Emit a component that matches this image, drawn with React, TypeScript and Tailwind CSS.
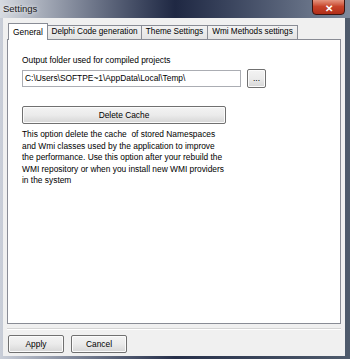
import React from 'react';

const font = { fontFamily: '"Liberation Sans", Arial, sans-serif' };

function WinButton({ label, className }: { label: string; className: string }) {
  return (
    <div
      className={`flex items-center justify-center rounded-[2px] border border-[#707070] bg-gradient-to-b from-[#f3f3f3] via-[#ebebeb] to-[#d6d6d6] text-[8.4px] text-black shadow-[inset_0_0_0_1px_#fbfbfb] ${className}`}
    >
      {label}
    </div>
  );
}

const tabs = [
  { label: 'Delphi Code generation', w: 'w-[95px]' },
  { label: 'Theme Settings', w: 'w-[67px]' },
  { label: 'Wmi Methods settings', w: 'w-[91px]' },
];

const lines = [
  'This option delete the cache\u00a0 of stored Namespaces',
  'and Wmi classes used by the application to improve',
  'the performance. Use this option after your rebuild the',
  'WMI repository or when you install new WMI providers',
  'in the system',
];

export default function App() {
  return (
    <div className="relative flex h-[359px] w-[350px] flex-col overflow-hidden bg-gradient-to-r from-[#c9ced8] via-[#27304a] to-[#4f5b6c]" style={font}>
      {/* title bar */}
      <div className="flex h-[18px] shrink-0 items-center justify-between bg-gradient-to-r from-[#d7dbe1] via-[#1f2843] to-[#7f8a9c] pl-[3px] pr-[5px]">
        <span className="text-[9.5px] text-[#1a1a1a] [text-shadow:0_0_4px_#ffffff]">Settings</span>
        <div className="-mt-[5px] flex h-[17px] w-[33px] items-center justify-center rounded-b-[4px] border border-[#3b1410] bg-gradient-to-b from-[#e8a08c] via-[#c7432a] to-[#b02d18] pt-[3px] text-[10px] font-bold text-white">
          ✕
        </div>
      </div>

      {/* client area */}
      <div className="ml-[3px] mr-[5px] mb-[3px] flex flex-1 flex-col bg-[#f0f0f0]">
        {/* tabs */}
        <div className="flex h-[21px] shrink-0 items-end pl-[5px] pt-[6px]">
          <div className="relative z-10 -mb-px flex h-[17px] w-[40px] items-center justify-center border border-b-0 border-[#898c95] bg-white text-[8.4px] text-black">
            General
          </div>
          {tabs.map((t) => (
            <div
              key={t.label}
              className={`-ml-px flex h-[14px] items-center justify-center border border-b-0 border-[#898c95] bg-gradient-to-b from-[#f2f2f2] to-[#e3e3e3] text-[8.2px] text-black first:ml-0 ${t.w}`}
            >
              {t.label}
            </div>
          ))}
        </div>

        {/* panel */}
        <div className="mx-[4px] h-[285px] shrink-0 border border-[#898c95] bg-white px-[14px] pt-[15px] text-[8.4px] text-black">
          <div className="leading-[11px]">Output folder used for compiled projects</div>
          <div className="mt-[3px] flex items-center gap-[6px]">
            <div className="flex h-[17px] w-[219px] items-center border border-[#abadb3] bg-white px-[2px] text-[8.4px]">
              C:\Users\SOFTPE~1\AppData\Local\Temp\
            </div>
            <WinButton label="..." className="h-[19px] w-[19px]" />
          </div>
          <WinButton label="Delete Cache" className="mt-[18px] h-[18px] w-[204px]" />
          <div className="mt-[5px] leading-[11.6px]">
            {lines.map((l) => (
              <div key={l}>{l}</div>
            ))}
          </div>
        </div>

        {/* separator */}
        <div className="mx-[4px] mt-[4px] h-px bg-[#d5d5d5]" />
        <div className="mx-[4px] h-px bg-white" />

        {/* bottom buttons */}
        <div className="flex gap-[7px] pl-[5px] pt-[5px]">
          <WinButton label="Apply" className="h-[18px] w-[56px]" />
          <WinButton label="Cancel" className="h-[18px] w-[56px]" />
        </div>
      </div>
    </div>
  );
}
